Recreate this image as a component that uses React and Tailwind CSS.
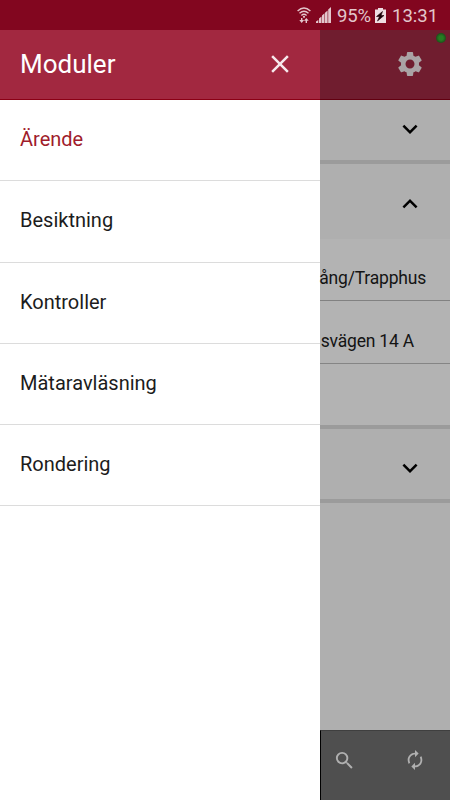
import { MdSettings, MdClose, MdExpandMore, MdExpandLess, MdSearch, MdAutorenew } from 'react-icons/md';

const modules = ['Ärende', 'Besiktning', 'Kontroller', 'Mätaravläsning', 'Rondering'];

function StatusBar() {
  return (
    <div className="flex h-[30px] shrink-0 items-center bg-[#82061f] pl-[297px] text-[#e3c6cc]">
      <svg className="h-[18px] w-[14px] shrink-0" viewBox="0 0 14 18" fill="none" stroke="currentColor">
        <path d="M.6 5Q7 -1.200 13.400 5M2.500 7.300Q7 3.200 11.500 7.300M4.400 9.500Q7 7.200 9.600 9.500" strokeWidth="1.400" />
        <circle cx="7" cy="10.800" r="1.100" fill="currentColor" stroke="none" />
        <path d="M4.700 12v3M9.300 17v-3" strokeWidth="1.400" />
        <path d="M2.300 14h4.800L4.700 17zM6.900 14.800h4.800L9.300 12z" fill="currentColor" stroke="none" />
      </svg>
      <svg className="ml-[5px] h-[16px] w-[15px] shrink-0" viewBox="0 0 15 16" fill="currentColor">
        <path d="M0 16v-1.500L2.300 13v3zM3 16v-4.500L5.500 9.500V16zM6 16V8.500L8.500 6.300V16z" />
        <path d="M9 16V5.800l2.600-2.200V16zM12.200 16V2.600L15 0v16z" />
      </svg>
      <span className="ml-[6px] w-[38px] whitespace-nowrap pt-[2px] text-[18.5px] leading-[28px] tracking-[-0.2px]">95%</span>
      <svg className="mt-px h-[15px] w-[11px] shrink-0" viewBox="0 0 11 15">
        <path d="M3 0h5v1.500h3V15H0V1.500h3z" fill="#efdde2" />
        <path d="M7.500 3.500 1.500 8.500h3L2.500 13l6.500-5.500H6z" fill="#1b0006" stroke="#1b0006" strokeWidth=".6" />
      </svg>
      <span className="ml-[6px] whitespace-nowrap pt-[2px] text-[18.5px] leading-[28px]">13:31</span>
    </div>
  );
}

function Drawer() {
  return (
    <aside className="flex w-[320px] shrink-0 flex-col bg-white">
      <header className="flex h-[70px] shrink-0 items-center justify-between border-b border-[#8b0015] bg-[#a22840] pb-[2px] pl-5 pr-[25px] text-white">
        <h1 className="text-[26px] leading-[30px]">Moduler</h1>
        <MdClose className="size-[30px] text-[#f6e9ec]" />
      </header>
      <nav className="flex flex-col">
        {modules.map((name, i) => (
          <a
            key={name}
            className={
              'flex h-[81.25px] items-center border-b border-[#dcdcdc] px-5 pb-[2px] text-[20px] ' +
              (i === 0 ? 'text-[#a01c2c]' : 'text-[#1c1c1c]')
            }
          >
            {name}
          </a>
        ))}
      </nav>
    </aside>
  );
}

function Page() {
  return (
    <main className="flex min-w-0 flex-1 flex-col bg-[#afafaf] text-[17.5px] tracking-[-0.2px] text-[#141414]">
      <header className="relative flex h-[70px] shrink-0 items-center justify-end border-b border-[#620010] bg-[#701d2f] pb-[2px] pr-[25px]">
        <MdSettings className="size-[30px] text-[#aaa3a5]" />
        <span className="absolute right-1 top-[3px] size-[10px] rounded-full bg-[radial-gradient(circle,#267d22_30%,#1c4a19_75%)]" />
      </header>
      <section className="flex h-[64px] shrink-0 items-center justify-end border-b-4 border-[#9b9b9b] pb-[2px] pr-[25px]">
        <MdExpandMore className="size-[30px] text-black" />
      </section>
      <section className="flex h-[75px] shrink-0 items-center justify-end pr-[25px] pt-[4px]">
        <MdExpandLess className="size-[30px] text-black" />
      </section>
      <section className="flex h-[190px] shrink-0 flex-col border-b-4 border-[#9b9b9b] bg-[#b3b3b3]">
        <div className="flex h-[62px] shrink-0 items-end justify-end whitespace-nowrap border-b border-[#818181] pb-[8px] pr-6 leading-[28px]">
          ång/Trapphus
        </div>
        <div className="flex h-[63px] shrink-0 items-end justify-end whitespace-nowrap border-b border-[#858585] pb-[8px] pr-[36px] leading-[28px]">
          svägen 14 A
        </div>
      </section>
      <section className="flex h-[74px] shrink-0 items-center justify-end border-b-4 border-[#9b9b9b] pr-[25px] pt-[7px]">
        <MdExpandMore className="size-[30px] text-black" />
      </section>
      <div className="flex-1" />
      <footer className="flex h-[70px] shrink-0 items-center justify-between border-l border-t border-l-black border-t-[#3f3f3f] bg-[#4f4f4f] pb-[11px] pl-[12px] pr-[24px] text-[#b0b0b0]">
        <MdSearch className="size-[23px]" />
        <MdAutorenew className="size-[22px]" />
      </footer>
    </main>
  );
}

export default function App() {
  return (
    <div className="flex h-[800px] w-[450px] flex-col overflow-hidden font-[Roboto,sans-serif]">
      <StatusBar />
      <div className="flex min-h-0 flex-1">
        <Drawer />
        <Page />
      </div>
    </div>
  );
}
